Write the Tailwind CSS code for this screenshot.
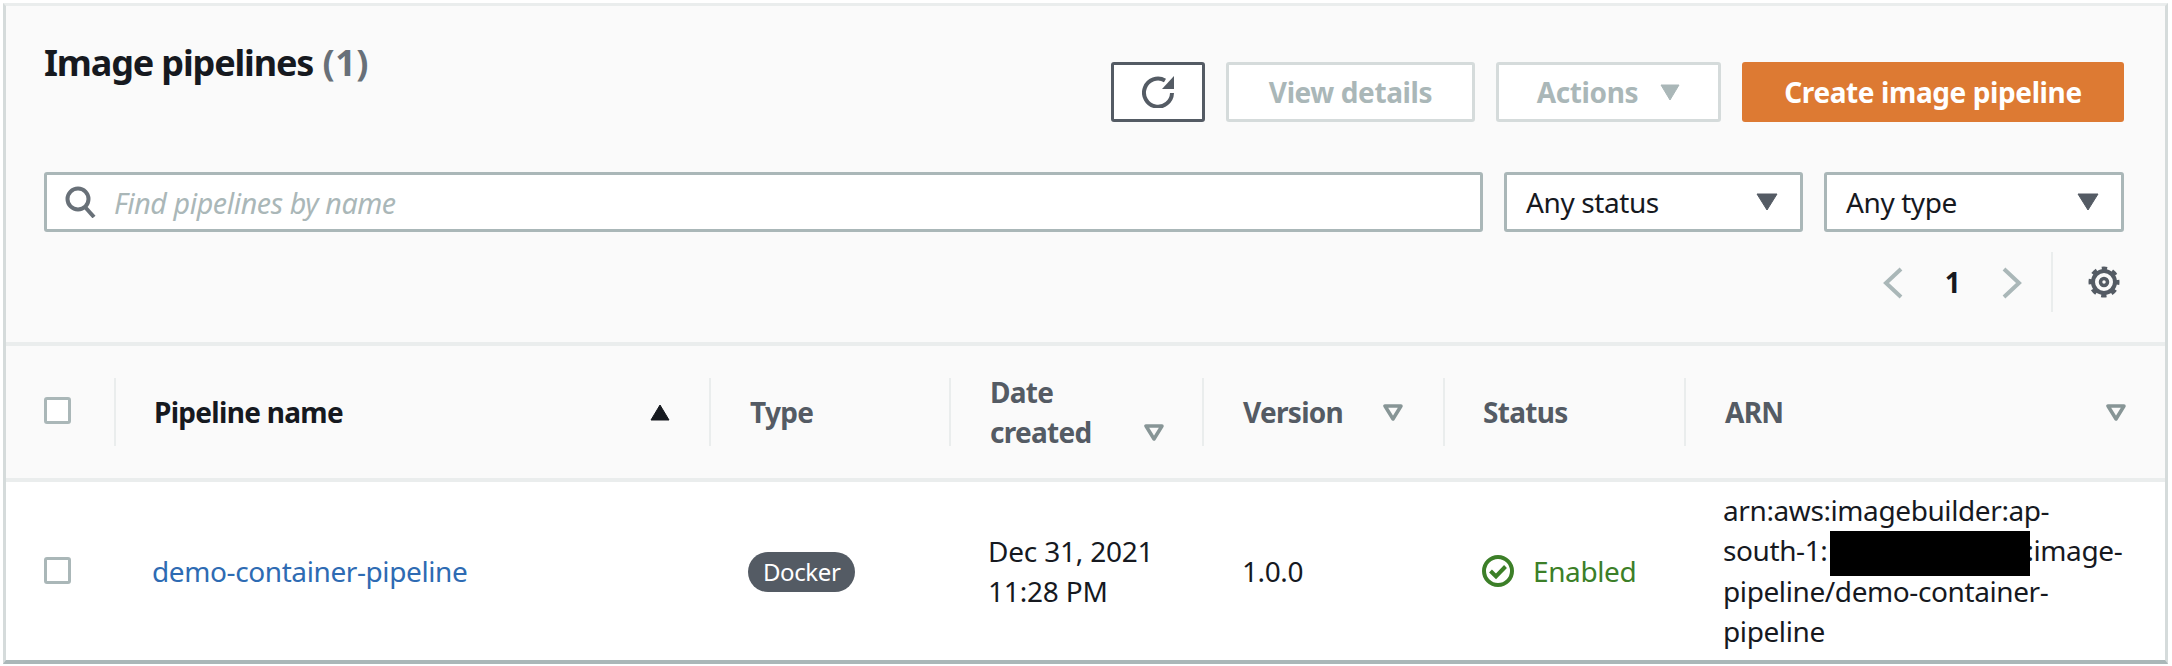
<!DOCTYPE html>
<html lang="en">
<head>
    <meta charset="UTF-8">
    <title>Image pipelines</title>
    <script src="https://cdn.jsdelivr.net/npm/@tailwindcss/browser@4"></script>
</head>
<body class="bg-white font-['Noto_Sans',sans-serif] text-[28px] leading-[40px] text-[#16191f] tracking-[-0.4px]">
    <div class="w-[2172px] h-[666px] pl-[3px] pr-[4px] pt-[3px] pb-[2px]">
        <div class="h-full flex flex-col border-l-[3px] border-r-[3px] border-t-[3px] border-b-[4px] border-l-[#d5dbdb] border-r-[#d5dbdb] border-t-[#eaeded] border-b-[#aab7b8]">

            <!-- Top panel -->
            <div class="h-[336px] bg-[#fafafa] pl-[38px] pr-[41px] flex flex-col shrink-0">
                <div class="h-[166px] flex justify-between shrink-0">
                    <h1 class="text-[36px] leading-[48px] font-bold mt-[33px] tracking-[-1.15px]">Image pipelines <span class="text-[#687078] tracking-[0.5px] ml-[1px]">(1)</span></h1>
                    <div class="flex gap-[21px] pt-[56px] font-bold">
                        <button class="w-[94px] h-[60px] bg-white border-[3px] border-[#545b64] rounded-[3px] flex items-center justify-center">
                            <svg width="32" height="32" viewBox="0 0 32 32" fill="none"><path d="M30 17a14 14 0 1 1-7-12.5" stroke="#545b64" stroke-width="4"/><path d="M32 0v13H20z" fill="#545b64"/></svg>
                        </button>
                        <button class="w-[249px] h-[60px] bg-white border-[3px] border-[#d5dbdb] rounded-[3px] text-[#aab7b8]">View details</button>
                        <button class="w-[225px] h-[60px] bg-white border-[3px] border-[#d5dbdb] rounded-[3px] text-[#aab7b8] flex items-center justify-center gap-[22px]">Actions
                            <svg width="20" height="17" viewBox="0 0 20 17"><path d="M1 1h18l-9 15z" fill="#aab7b8" stroke="#aab7b8" stroke-linejoin="round"/></svg>
                        </button>
                        <button class="w-[382px] h-[60px] bg-[#dd7a33] rounded-[3px] text-white">Create image pipeline</button>
                    </div>
                </div>
                <div class="flex gap-[21px] h-[60px] shrink-0">
                    <div class="flex-1 bg-white border-[3px] border-[#aab7b8] rounded-[3px] flex items-center pl-[18px] gap-[17px]">
                        <svg width="32" height="32" viewBox="0 0 32 32" fill="none" stroke="#687078" stroke-width="4"><circle cx="13" cy="13" r="10.5"/><path d="M20 21l9 10"/></svg>
                        <span class="italic text-[#aab7b8] text-[28.6px] mt-[2px]">Find pipelines by name</span>
                    </div>
                    <div class="w-[299px] bg-white border-[3px] border-[#aab7b8] rounded-[3px] flex items-center justify-between pl-[19px] pr-[22px]">Any status
                        <svg width="22" height="18" viewBox="0 0 22 18"><path d="M1 1h20l-10 16z" fill="#545b64" stroke="#545b64" stroke-linejoin="round"/></svg>
                    </div>
                    <div class="w-[300px] bg-white border-[3px] border-[#aab7b8] rounded-[3px] flex items-center justify-between pl-[19px] pr-[22px]">Any type
                        <svg width="22" height="18" viewBox="0 0 22 18"><path d="M1 1h20l-10 16z" fill="#545b64" stroke="#545b64" stroke-linejoin="round"/></svg>
                    </div>
                </div>
                <div class="flex justify-end items-start h-[60px] mt-[20px] font-bold pr-[4px]">
                    <svg class="mt-[15px]" width="20" height="32" viewBox="0 0 20 32" fill="none" stroke="#aab7b8" stroke-width="4"><path d="M18 2L3 16l15 14"/></svg>
                    <span class="w-[99px] text-center mt-[10px]">1</span>
                    <svg class="mt-[15px]" width="20" height="32" viewBox="0 0 20 32" fill="none" stroke="#aab7b8" stroke-width="4"><path d="M2 2l15 14L2 30"/></svg>
                    <div class="w-[2px] h-[60px] bg-[#eaeded] ml-[29px]"></div>
                    <svg class="ml-[35px] mt-[14px]" width="32" height="32" viewBox="0 0 32 32" fill="none" stroke="#545b64"><circle cx="16" cy="16" r="11" stroke-width="4"/><circle cx="16" cy="16" r="13.5" stroke-width="4" stroke-dasharray="5.3 5.3" stroke-dashoffset="2.6"/><circle cx="16" cy="16" r="3.5" stroke-width="3.5"/></svg>
                </div>
            </div>

            <!-- Table header -->
            <div class="h-[140px] shrink-0 bg-[#fafafa] border-t-[4px] border-b-[4px] border-[#eaeded] grid grid-cols-[108px_595px_240px_253px_241px_241px_478px] items-center font-bold text-[#545b64] tracking-[-0.7px]">
                <div class="pl-[38px]"><div class="w-[27px] h-[27px] -mt-[3px] bg-white border-[3px] border-[#aab7b8] rounded-[3px]"></div></div>
                <div class="flex items-center pr-[39px] text-[#16191f]">
                    <div class="w-[2px] h-[68px] bg-[#eaeded] mr-[38px]"></div><span class="flex-1">Pipeline name</span>
                    <svg width="20" height="17" viewBox="0 0 20 17"><path d="M10 1l9 15H1z" fill="#16191f" stroke="#16191f" stroke-linejoin="round"/></svg>
                </div>
                <div class="flex items-center"><div class="w-[2px] h-[68px] bg-[#eaeded] mr-[39px]"></div>Type</div>
                <div class="flex items-center pr-[38px]">
                    <div class="w-[2px] h-[68px] bg-[#eaeded] mr-[39px]"></div><span class="flex-1">Date<br>created</span>
                    <svg class="mt-[40px]" width="20" height="17" viewBox="0 0 20 17" fill="none"><path d="M2 2h16l-8 13z" stroke="#879596" stroke-width="3.5" stroke-linejoin="round"/></svg>
                </div>
                <div class="flex items-center pr-[40px]">
                    <div class="w-[2px] h-[68px] bg-[#eaeded] mr-[39px]"></div><span class="flex-1">Version</span>
                    <svg width="20" height="17" viewBox="0 0 20 17" fill="none"><path d="M2 2h16l-8 13z" stroke="#879596" stroke-width="3.5" stroke-linejoin="round"/></svg>
                </div>
                <div class="flex items-center"><div class="w-[2px] h-[68px] bg-[#eaeded] mr-[38px]"></div>Status</div>
                <div class="flex items-center pr-[36px]">
                    <div class="w-[2px] h-[68px] bg-[#eaeded] mr-[39px]"></div><span class="flex-1">ARN</span>
                    <svg width="20" height="17" viewBox="0 0 20 17" fill="none"><path d="M2 2h16l-8 13z" stroke="#879596" stroke-width="3.5" stroke-linejoin="round"/></svg>
                </div>
            </div>

            <!-- Row -->
            <div class="flex-1 bg-white grid grid-cols-[108px_595px_240px_253px_241px_241px_478px] items-center pb-[1px]">
                <div class="pl-[38px]"><div class="w-[27px] h-[27px] border-[3px] border-[#aab7b8] rounded-[3px]"></div></div>
                <a class="pl-[38px] text-[#2e6bb3]">demo-container-pipeline</a>
                <div class="pl-[39px]"><span class="inline-block h-[40px] rounded-[20px] bg-[#545b64] text-white text-[24px] leading-[40px] px-[15px]">Docker</span></div>
                <div class="pl-[39px] tracking-[-0.2px]">Dec 31, 2021<br>11:28 PM</div>
                <div class="pl-[40px]">1.0.0</div>
                <div class="pl-[39px] flex items-center gap-[19px] text-[#3c7f28]">
                    <svg width="32" height="32" viewBox="0 0 32 32" fill="none" stroke="#3c7f28" stroke-width="4"><circle cx="16" cy="16" r="14"/><path d="M8.5 16l5.5 5.5 9.5-10"/></svg>
                    Enabled
                </div>
                <div class="pl-[39px] pr-[30px]">arn:aws:imagebuilder:ap-<br>south-1:<span class="relative inline-block w-[200px] h-[45px] -my-[5px] ml-[3px] -mr-[4px] align-middle bg-black"></span>:image-<br>pipeline/demo-container-<br>pipeline</div>
            </div>
        </div>
    </div>
</body>
</html>
